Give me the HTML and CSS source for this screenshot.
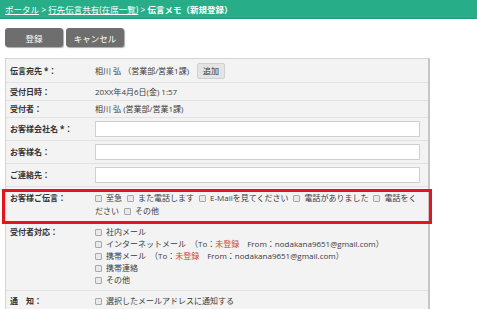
FILE: index.html
```
<!DOCTYPE html>
<html>
  <head>
    <title>伝言メモ</title>
    <link rel="stylesheet" href="styles.css">
  </head>
  <body>
    <div class="crumbs">
      <a href="#">ポータル</a> &gt; <a href="#">行先伝言共有(在席一覧)</a> &gt; <b>伝言メモ（新規登録）</b>
    </div>
    <div class="actions">
      <button class="btn">登録</button>
      <button class="btn">キャンセル</button>
    </div>
    <div class="form">
      <div class="row dest">
        <div class="label">伝言宛先 *：</div>
        <div class="value">相川 弘 （営業部/営業1課) <button class="add">追加</button></div>
      </div>
      <div class="row info">
        <div class="label">受付日時：</div>
        <div class="value">20XX年4月6日(金) 1:57</div>
      </div>
      <div class="row small">
        <div class="label">受付者：</div>
        <div class="value">相川 弘 (営業部/営業1課)</div>
      </div>
      <div class="row field">
        <div class="label">お客様会社名 *：</div>
        <div class="value"><input class="text"></div>
      </div>
      <div class="row field">
        <div class="label">お客様名：</div>
        <div class="value"><input class="text"></div>
      </div>
      <div class="row field">
        <div class="label">ご連絡先：</div>
        <div class="value"><input class="text"></div>
      </div>
      <div class="row message">
        <div class="label">お客様ご伝言：</div>
        <div class="value"><i class="box"></i><span class="chk">至急</span><i class="box"></i><span class="chk">また電話します</span><i class="box"></i><span class="chk">E-Mailを見てください</span><i class="box"></i><span class="chk">電話がありました</span><i class="box"></i><span class="chk">電話をください</span><i class="box"></i>その他</div>
        <div class="mark"></div>
      </div>
      <div class="row reply">
        <div class="label">受付者対応：</div>
        <div class="value">
          <div><i class="box"></i>社内メール</div>
          <div><i class="box"></i>インターネットメール　（To：<span class="red">未登録</span>　From：nodakana9651@gmail.com）</div>
          <div><i class="box"></i>携帯メール　（To：<span class="red">未登録</span>　From：nodakana9651@gmail.com）</div>
          <div><i class="box"></i>携帯連絡</div>
          <div><i class="box"></i>その他</div>
        </div>
      </div>
      <div class="row">
        <div class="label">通　知：</div>
        <div class="value"><i class="box"></i>選択したメールアドレスに通知する</div>
      </div>
    </div>
  </body>
</html>
```
FILE: styles.css
```
body{
  margin:0;
  font-family:"Open Sans","Noto Sans CJK JP",sans-serif;
  font-size:8px;
  color:#3a3a3a;
  background:#fff;
}
.crumbs{
  height:19px;
  line-height:19px;
  padding-left:5px;
  background:#27ae88;
  border-bottom:1px solid #1f9b78;
  color:#fff;
  font-size:8.5px;
  box-sizing:border-box;
}
.crumbs a{
  color:#fff;
}
.actions{
  display:flex;
  gap:3px;
  padding:9px 5px 11px;
}
.btn{
  width:58px;
  height:19px;
  border:none;
  border-radius:3px;
  background:#6e6e6e;
  color:#fff;
  font-family:inherit;
  font-size:8.5px;
  box-shadow:1px 1px 1px #aaa;
}
.form{
  margin-left:5px;
  width:422px;
  background:#f3f3f3;
  border:1px solid #d4d4d4;
  border-right:2px solid #c6c6c6;
}
.row{
  display:flex;
  position:relative;
  padding:4px 0;
  line-height:12px;
  border-bottom:1px solid #e2e2e2;
}
.row.dest{
  padding:3px 0;
  align-items:center;
}
.row.dest .value{
  display:flex;
  align-items:center;
  height:17px;
}
.row.info{
  padding:3px 0 2px;
}
.row.small{
  padding:2px 0;
}
.row.field{
  padding:3px 0;
}
.row.message{
  padding:4px 0 6px;
  line-height:13px;
}
.row.reply{
  padding:2px 0 4px;
}
.label{
  width:89px;
  padding-left:4px;
  box-sizing:border-box;
  font-weight:bold;
  color:#333;
  flex-shrink:0;
}
.row.field .label{
  padding-top:2px;
}
.value{
  flex:1;
  padding-right:8px;
}
.add{
  height:16px;
  margin-left:8px;
  padding:0 5px;
  border:1px solid #d0d0d0;
  border-radius:2px;
  background:#e4e4e4;
  color:#333;
  font-family:inherit;
  font-size:8px;
}
.text{
  display:block;
  width:100%;
  height:16px;
  box-sizing:border-box;
  border:1px solid #cfcfcf;
  background:#fff;
}
.box{
  display:inline-block;
  width:5px;
  height:5px;
  margin-right:4px;
  border:1px solid #a9a9a9;
  border-radius:1px;
  background:#e9e9e9;
  vertical-align:-1px;
}
.chk{
  margin-right:5px;
}
.red{
  color:#d0473a;
}
.mark{
  position:absolute;
  left:-4px;
  right:-4px;
  top:2px;
  height:29px;
  border:3px solid #e8141c;
}
```
